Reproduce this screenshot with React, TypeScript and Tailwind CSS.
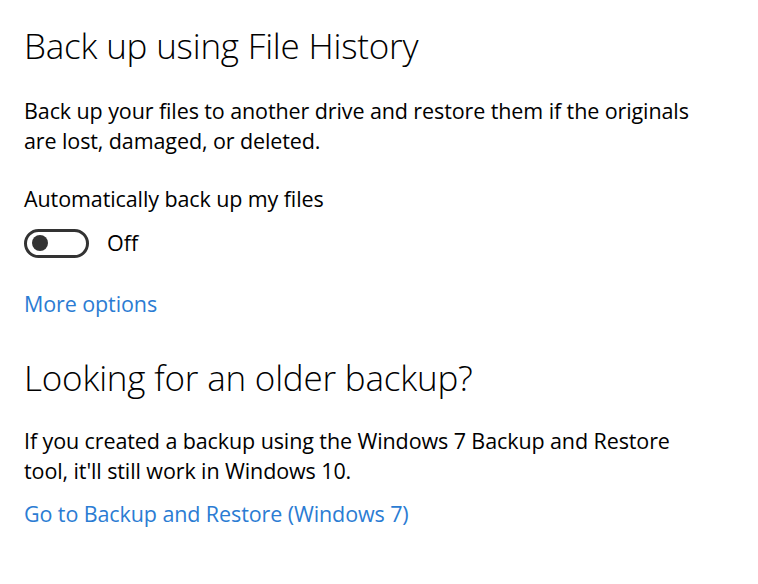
export default function App() {
  return (
    <div className="w-[758px] h-[584px] bg-white text-black font-['Open_Sans','Noto_Sans',sans-serif] pl-6 pt-[22px]">
      <h2 className="text-[35px] leading-[48px] font-light tracking-[-0.2px]">Back up using File History</h2>
      <p className="mt-[26px] text-[21.5px] leading-[30px] w-[690px] tracking-[-0.1px]">
        Back up your files to another drive and restore them if the originals are lost, damaged, or deleted.
      </p>
      <p className="mt-[28px] text-[21.5px] leading-[30px] tracking-[-0.1px]">Automatically back up my files</p>
      <div className="mt-[14px] flex items-center gap-[18px]">
        <button className="w-[65px] h-[29px] rounded-full border-[3px] border-[#333] flex items-center pl-[5px]">
          <span className="w-[16px] h-[16px] rounded-full bg-[#333]" />
        </button>
        <span className="text-[21.5px] leading-[30px]">Off</span>
      </div>
      <a className="block mt-[31px] text-[21.5px] leading-[30px] text-[#2b7cd3] tracking-[-0.1px]">More options</a>
      <h2 className="mt-[35px] text-[35px] leading-[48px] font-light tracking-[-0.2px]">Looking for an older backup?</h2>
      <p className="mt-[24px] text-[21.5px] leading-[30px] w-[690px] tracking-[-0.1px]">
        If you created a backup using the Windows 7 Backup and Restore tool, it'll still work in Windows 10.
      </p>
      <a className="block mt-[13px] text-[21.5px] leading-[30px] text-[#2b7cd3] tracking-[-0.1px]">Go to Backup and Restore (Windows 7)</a>
    </div>
  );
}
